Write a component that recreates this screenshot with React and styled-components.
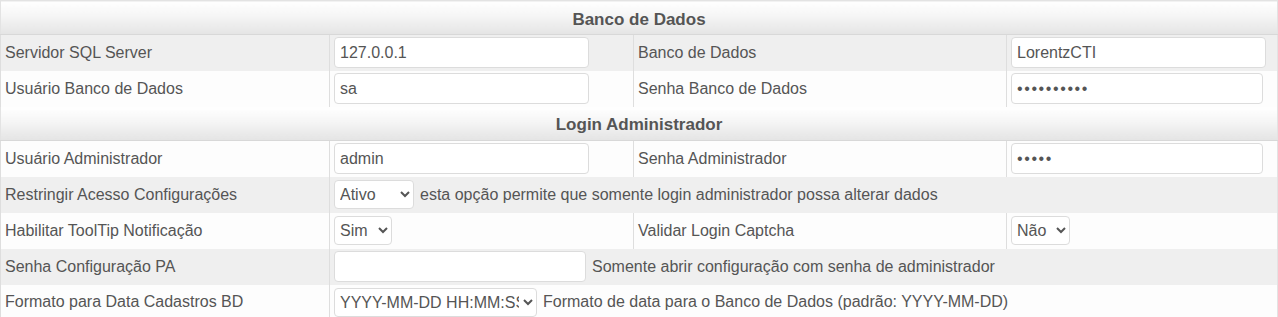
import React from 'react'
import styled, { createGlobalStyle } from 'styled-components'

const GlobalStyle = createGlobalStyle`
  body {
    margin: 0;
    background: #ffffff;
    font-family: 'Liberation Sans', Arial, sans-serif;
  }
`

const Table = styled.table`
  width: 100%;
  border-collapse: collapse;
  table-layout: fixed;
  font-size: 16px;
  color: #555555;
  border: 1px solid #e3e3e3;
`

const HeaderRow = styled.tr`
  height: 34px;
`

const SectionHeader = styled.th`
  padding: 4px 0 0;
  font-size: 17px;
  font-weight: bold;
  text-align: center;
  color: #555555;
  background: linear-gradient(to bottom, #ffffff 0%, #f5f5f5 45%, #e4e4e4 100%);
  border-bottom: 1px solid #d8d8d8;
`

const Row = styled.tr`
  height: 36px;
  background: ${p => (p.$shaded ? '#efefef' : '#fdfdfd')};
`

const Cell = styled.td`
  padding: 0 4px;
  border-left: 1px solid #dedede;
  vertical-align: middle;
  white-space: nowrap;
  overflow: hidden;
`

const TextInput = styled.input`
  box-sizing: border-box;
  width: ${p => p.$w || 255}px;
  height: 31px;
  padding: 0 5px;
  border: 1px solid #dcdcdc;
  border-radius: 4px;
  background: #ffffff;
  font: inherit;
  color: #555555;
  vertical-align: middle;
  outline: none;
  letter-spacing: ${p => (p.type === 'password' ? '1.6px' : 'normal')};
`

const Select = styled.select`
  box-sizing: border-box;
  width: ${p => p.$w}px;
  height: 29px;
  padding: 0 1px;
  border: 1px solid #dcdcdc;
  border-radius: 4px;
  background: #ffffff;
  font: inherit;
  color: #555555;
  vertical-align: middle;
`

const Hint = styled.span`
  margin-left: 6px;
  vertical-align: middle;
`

const Section = ({ title }) => (
  <HeaderRow>
    <SectionHeader colSpan={4}>{title}</SectionHeader>
  </HeaderRow>
)

export default function App() {
  return (
    <>
      <GlobalStyle />
      <Table>
        <colgroup>
          <col style={{ width: 329 }} />
          <col style={{ width: 304 }} />
          <col style={{ width: 373 }} />
          <col />
        </colgroup>
        <tbody>
          <Section title="Banco de Dados" />
          <Row $shaded>
            <Cell>Servidor SQL Server</Cell>
            <Cell><TextInput defaultValue="127.0.0.1" /></Cell>
            <Cell>Banco de Dados</Cell>
            <Cell><TextInput defaultValue="LorentzCTI" /></Cell>
          </Row>
          <Row>
            <Cell>Usuário Banco de Dados</Cell>
            <Cell><TextInput defaultValue="sa" /></Cell>
            <Cell>Senha Banco de Dados</Cell>
            <Cell><TextInput type="password" $w={252} defaultValue="1234567890" /></Cell>
          </Row>

          <Section title="Login Administrador" />
          <Row>
            <Cell>Usuário Administrador</Cell>
            <Cell><TextInput defaultValue="admin" /></Cell>
            <Cell>Senha Administrador</Cell>
            <Cell><TextInput type="password" $w={252} defaultValue="admin" /></Cell>
          </Row>
          <Row $shaded>
            <Cell>Restringir Acesso Configurações</Cell>
            <Cell colSpan={3}>
              <Select $w={80} defaultValue="1">
                <option value="1">Ativo</option>
                <option value="0">Inativo</option>
              </Select>
              <Hint>esta opção permite que somente login administrador possa alterar dados</Hint>
            </Cell>
          </Row>
          <Row>
            <Cell>Habilitar ToolTip Notificação</Cell>
            <Cell>
              <Select $w={58} defaultValue="1">
                <option value="1">Sim</option>
                <option value="0">Não</option>
              </Select>
            </Cell>
            <Cell>Validar Login Captcha</Cell>
            <Cell>
              <Select $w={59} defaultValue="0">
                <option value="1">Sim</option>
                <option value="0">Não</option>
              </Select>
            </Cell>
          </Row>
          <Row $shaded>
            <Cell>Senha Configuração PA</Cell>
            <Cell colSpan={3}>
              <TextInput type="password" $w={252} />
              <Hint>Somente abrir configuração com senha de administrador</Hint>
            </Cell>
          </Row>
          <Row>
            <Cell>Formato para Data Cadastros BD</Cell>
            <Cell colSpan={3}>
              <Select $w={203} defaultValue="YYYY-MM-DD HH:MM:SS">
                <option>YYYY-MM-DD HH:MM:SS</option>
                <option>YYYY-MM-DD</option>
                <option>DD/MM/YYYY HH:MM:SS</option>
              </Select>
              <Hint>Formato de data para o Banco de Dados (padrão: YYYY-MM-DD)</Hint>
            </Cell>
          </Row>
        </tbody>
      </Table>
    </>
  )
}
